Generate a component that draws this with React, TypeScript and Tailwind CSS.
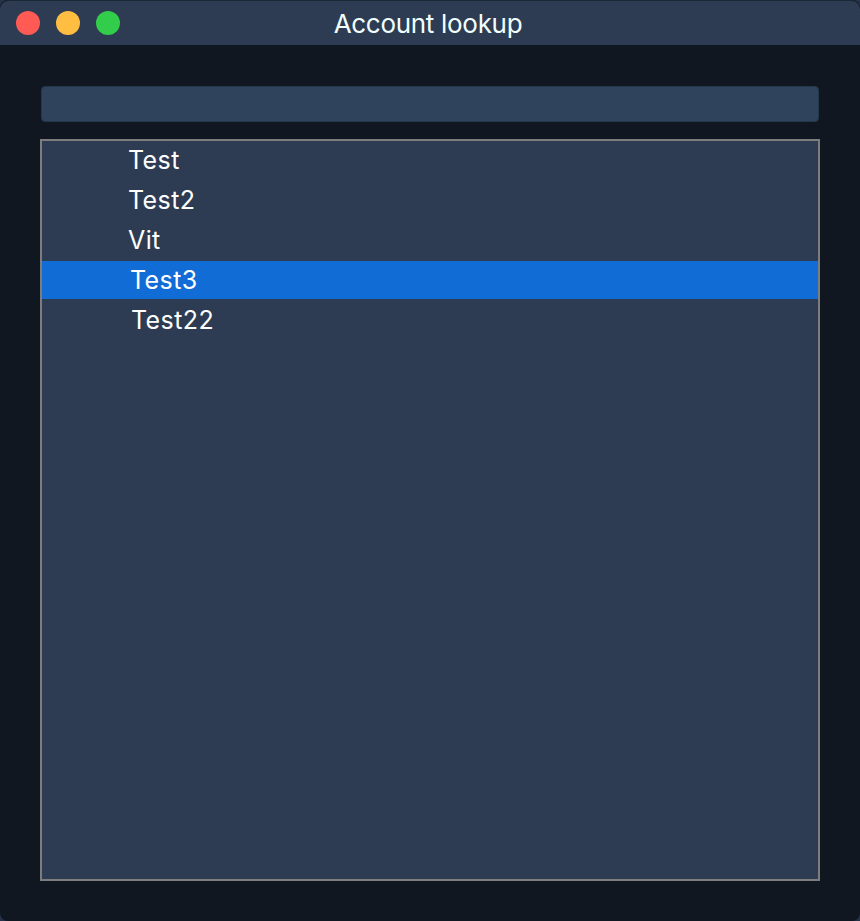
const accounts = [
  { name: "Test", pad: "pl-[86px]", selected: false },
  { name: "Test2", pad: "pl-[86px]", selected: false },
  { name: "Vit", pad: "pl-[86px]", selected: false },
  { name: "Test3", pad: "pl-[88px]", selected: true },
  { name: "Test22", pad: "pl-[89px]", selected: false },
];

export default function App() {
  return (
    <div className="h-[921px] w-[860px] bg-[#253249] font-['Inter',sans-serif] text-white">
      <div className="flex h-full flex-col overflow-hidden rounded-[8px] bg-[#101720]">
        <header className="grid h-[45px] shrink-0 grid-cols-[1fr_auto_1fr] items-center rounded-t-[9px] border-t border-[#1c2735] bg-[#2d3c52] px-4">
          <div className="flex gap-4">
            <span className="size-6 rounded-full bg-[#ff5a54]" />
            <span className="size-6 rounded-full bg-[#ffbe41]" />
            <span className="size-6 rounded-full bg-[#32cd4b]" />
          </div>
          <h1 className="-ml-1 pt-0.5 text-[26px] leading-[42px] tracking-[-0.3px] text-[#f2ffff]">Account lookup</h1>
        </header>
        <main className="flex min-h-0 flex-1 flex-col px-10 pt-[41px] pb-10">
          <input aria-label="Search" className="mx-px h-9 shrink-0 rounded-[4px] border border-[#26364b] bg-[#30435c] px-2 outline-none" />
          <ul className="mt-[17px] min-h-0 flex-1 border-2 border-[#7d7d7d] bg-[#2d3c52]">
            {accounts.map((a) => (
              <li key={a.name} className="h-10">
                <div className={`${a.pad} h-[38px] w-full text-[25px] leading-[38px] tracking-[0.4px] ${a.selected ? "bg-[#116cd6]" : ""}`}>{a.name}</div>
              </li>
            ))}
          </ul>
        </main>
      </div>
    </div>
  );
}
